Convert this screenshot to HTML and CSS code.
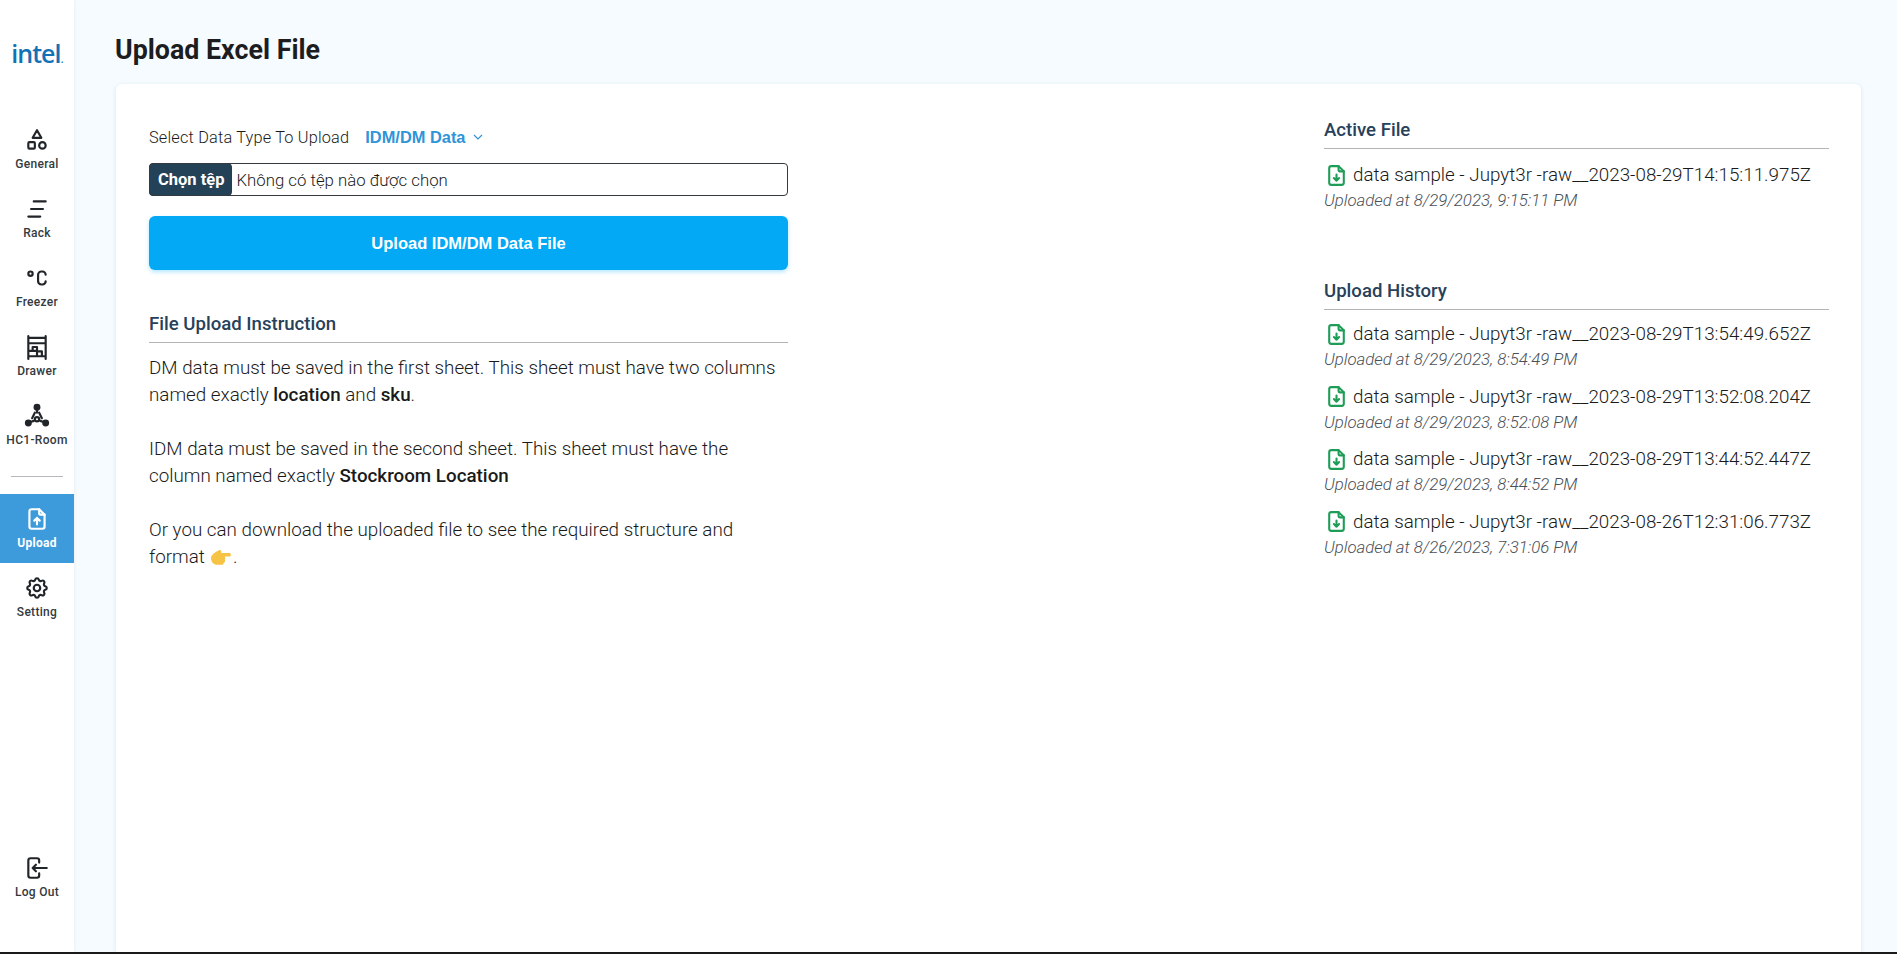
FILE: index.html
```html
<!DOCTYPE html>
<html lang="vi">
<head>
    <meta charset="UTF-8">
    <title>Upload Excel File</title>
    <link rel="stylesheet" href="styles.css">
</head>
<body>
    <div class="app">
        <!-- Sidebar -->
        <aside class="sidebar">
            <div class="logo">intel<span class="logo-dot">.</span></div>
            <nav class="nav">
                <a class="nav-item">
                    <svg class="icon" viewBox="0 0 24 24"><path d="M12 3l-4 7h8z"/><circle cx="17" cy="17" r="3"/><rect x="4" y="14" width="6" height="6" rx="1"/></svg>
                    <span>General</span>
                </a>
                <a class="nav-item">
                    <svg class="icon" viewBox="0 0 24 24"><path d="M9 5h11M6.500 12h11M4 19h11"/></svg>
                    <span>Rack</span>
                </a>
                <a class="nav-item">
                    <svg class="icon" viewBox="0 0 24 24"><circle cx="6" cy="8" r="2"/><path d="M20 9a3 3 0 0 0 -3 -3h-1a3 3 0 0 0 -3 3v6a3 3 0 0 0 3 3h1a3 3 0 0 0 3 -3"/></svg>
                    <span>Freezer</span>
                </a>
                <a class="nav-item">
                    <svg class="icon" viewBox="0 0 24 24"><path d="M4 23v-21M20 23v-21M4 3.500h16M4 8.500h16M4 20.500h16M8 12h4v3.500h-4zM4 15.500h8M12 16h4.500v4.500h-4.500z"/></svg>
                    <span>Drawer</span>
                </a>
                <a class="nav-item">
                    <svg class="icon" viewBox="0 0 24 24"><circle class="solid" cx="12" cy="4" r="2.200"/><circle class="solid" cx="4" cy="18.500" r="2.200"/><circle class="solid" cx="20" cy="18.500" r="2.200"/><circle cx="12" cy="15" r="2"/><path d="M12 6v3M6 17.500l3 -1M18 17.500l-3 -1M10 9l-2.500 5M14 9l2.500 5"/></svg>
                    <span>HC1-Room</span>
                </a>
                <div class="nav-divider"></div>
                <a class="nav-item active">
                    <svg class="icon" viewBox="0 0 24 24"><path d="M14 3v4a1 1 0 0 0 1 1h4"/><path d="M17 21h-10a2 2 0 0 1 -2 -2v-14a2 2 0 0 1 2 -2h7l5 5v11a2 2 0 0 1 -2 2z"/><path d="M12 17v-6M9.500 13.500l2.500 -2.500l2.500 2.500"/></svg>
                    <span>Upload</span>
                </a>
                <a class="nav-item">
                    <svg class="icon" viewBox="0 0 24 24"><path d="M10.325 4.317c.426 -1.756 2.924 -1.756 3.35 0a1.724 1.724 0 0 0 2.573 1.066c1.543 -.94 3.31 .826 2.37 2.37a1.724 1.724 0 0 0 1.065 2.572c1.756 .426 1.756 2.924 0 3.35a1.724 1.724 0 0 0 -1.066 2.573c.94 1.543 -.826 3.31 -2.37 2.37a1.724 1.724 0 0 0 -2.572 1.065c-.426 1.756 -2.924 1.756 -3.35 0a1.724 1.724 0 0 0 -2.573 -1.066c-1.543 .94 -3.31 -.826 -2.37 -2.370a1.724 1.724 0 0 0 -1.065 -2.572c-1.756 -.426 -1.756 -2.924 0 -3.350a1.724 1.724 0 0 0 1.066 -2.573c-.94 -1.543 .826 -3.31 2.37 -2.37c1 .608 2.296 .07 2.572 -1.065z"/><circle cx="12" cy="12" r="3"/></svg>
                    <span>Setting</span>
                </a>
            </nav>
            <a class="nav-item logout">
                <svg class="icon" viewBox="0 0 24 24"><path d="M14 7v-2a2 2 0 0 0 -2 -2h-6a2 2 0 0 0 -2 2v14a2 2 0 0 0 2 2h6a2 2 0 0 0 2 -2v-2"/><path d="M21 12h-13M11 9l-3 3l3 3"/></svg>
                <span>Log Out</span>
            </a>
        </aside>

        <!-- Main Content -->
        <main class="main">
            <h1 class="page-title">Upload Excel File</h1>
            <section class="card">
                <div class="col-left">
                    <div class="type-row">
                        <span class="type-label">Select Data Type To Upload</span>
                        <span class="type-value">IDM/DM Data
                            <svg class="chevron" viewBox="0 0 12 12"><path d="M2 4l4 4l4 -4"/></svg>
                        </span>
                    </div>
                    <div class="file-input">
                        <span class="file-btn">Chọn tệp</span>
                        <span class="file-name">Không có tệp nào được chọn</span>
                    </div>
                    <button class="upload-btn">Upload IDM/DM Data File</button>

                    <h2 class="section-title">File Upload Instruction</h2>
                    <p class="text">DM data must be saved in the first sheet. This sheet must have two columns named exactly <b>location</b> and <b>sku</b>.</p>
                    <p class="text">IDM data must be saved in the second sheet. This sheet must have the column named exactly <b>Stockroom Location</b></p>
                    <p class="text">Or you can download the uploaded file to see the required structure and format
                        <svg class="hand" viewBox="0 0 24 18"><path d="M1 9c1-3 4-6 9-8 2-1 3 1 2 3h9c2.500 0 2.500 4 0 4h-5c1 1 1 3 0 3.500 1 1 .5 3-1 3.200 0 1.300-1 2.300-2 2.300H8c-4 0-7-3-7-8z"/></svg> .</p>
                </div>

                <div class="col-right">
                    <h2 class="section-title active-title">Active File</h2>
                    <ul class="file-list">
                        <li class="file-item">
                            <div class="file-row">
                                <svg class="file-icon" viewBox="0 0 24 24"><path d="M14 3v4a1 1 0 0 0 1 1h4"/><path d="M17 21h-10a2 2 0 0 1 -2 -2v-14a2 2 0 0 1 2 -2h7l5 5v11a2 2 0 0 1 -2 2z"/><path d="M12 11v6M9.500 14.500l2.500 2.500l2.500 -2.500"/></svg>
                                data sample - Jupyt3r -raw__2023-08-29T14:15:11.975Z
                            </div>
                            <div class="file-date">Uploaded at 8/29/2023, 9:15:11 PM</div>
                        </li>
                    </ul>

                    <h2 class="section-title history-title">Upload History</h2>
                    <ul class="file-list">
                        <li class="file-item">
                            <div class="file-row">
                                <svg class="file-icon" viewBox="0 0 24 24"><path d="M14 3v4a1 1 0 0 0 1 1h4"/><path d="M17 21h-10a2 2 0 0 1 -2 -2v-14a2 2 0 0 1 2 -2h7l5 5v11a2 2 0 0 1 -2 2z"/><path d="M12 11v6M9.500 14.500l2.500 2.500l2.500 -2.500"/></svg>
                                data sample - Jupyt3r -raw__2023-08-29T13:54:49.652Z
                            </div>
                            <div class="file-date">Uploaded at 8/29/2023, 8:54:49 PM</div>
                        </li>
                        <li class="file-item">
                            <div class="file-row">
                                <svg class="file-icon" viewBox="0 0 24 24"><path d="M14 3v4a1 1 0 0 0 1 1h4"/><path d="M17 21h-10a2 2 0 0 1 -2 -2v-14a2 2 0 0 1 2 -2h7l5 5v11a2 2 0 0 1 -2 2z"/><path d="M12 11v6M9.500 14.500l2.500 2.500l2.500 -2.500"/></svg>
                                data sample - Jupyt3r -raw__2023-08-29T13:52:08.204Z
                            </div>
                            <div class="file-date">Uploaded at 8/29/2023, 8:52:08 PM</div>
                        </li>
                        <li class="file-item">
                            <div class="file-row">
                                <svg class="file-icon" viewBox="0 0 24 24"><path d="M14 3v4a1 1 0 0 0 1 1h4"/><path d="M17 21h-10a2 2 0 0 1 -2 -2v-14a2 2 0 0 1 2 -2h7l5 5v11a2 2 0 0 1 -2 2z"/><path d="M12 11v6M9.500 14.500l2.500 2.500l2.500 -2.500"/></svg>
                                data sample - Jupyt3r -raw__2023-08-29T13:44:52.447Z
                            </div>
                            <div class="file-date">Uploaded at 8/29/2023, 8:44:52 PM</div>
                        </li>
                        <li class="file-item">
                            <div class="file-row">
                                <svg class="file-icon" viewBox="0 0 24 24"><path d="M14 3v4a1 1 0 0 0 1 1h4"/><path d="M17 21h-10a2 2 0 0 1 -2 -2v-14a2 2 0 0 1 2 -2h7l5 5v11a2 2 0 0 1 -2 2z"/><path d="M12 11v6M9.500 14.500l2.500 2.500l2.500 -2.500"/></svg>
                                data sample - Jupyt3r -raw__2023-08-26T12:31:06.773Z
                            </div>
                            <div class="file-date">Uploaded at 8/26/2023, 7:31:06 PM</div>
                        </li>
                    </ul>
                </div>
            </section>
        </main>
    </div>
    <div class="screen-edge"></div>
</body>
</html>
```

FILE: styles.css
```css
* {
    margin: 0;
    padding: 0;
    box-sizing: border-box;
}

html,
body {
    height: 100%;
    overflow: hidden;
}

body {
    display: flex;
    flex-direction: column;
    font-family: Roboto, sans-serif;
    color: #1a1a1a;
    background: #f5fbff;
}

.app {
    flex: 1;
    min-height: 0;
    display: flex;
}

.screen-edge {
    height: 2px;
    background: #1a1a1a;
}

/* Sidebar */
.sidebar {
    width: 74px;
    flex-shrink: 0;
    display: flex;
    flex-direction: column;
    background: #fff;
    box-shadow: 1px 0 3px rgba(30, 70, 110, 0.05);
}

.logo {
    margin-top: 36px;
    height: 34px;
    text-align: center;
    font-family: "Open Sans", sans-serif;
    font-size: 25px;
    font-weight: 600;
    line-height: 34px;
    letter-spacing: -1px;
    color: #1272b5;
}

.logo-dot {
    font-size: 12px;
    font-weight: 400;
}

.nav {
    margin-top: 53px;
    display: flex;
    flex-direction: column;
}

.nav-item {
    height: 69px;
    display: flex;
    flex-direction: column;
    align-items: center;
    padding-top: 4px;
    font-size: 12px;
    font-weight: 500;
    line-height: 13px;
    letter-spacing: 0.3px;
    color: #343a40;
}

.icon {
    width: 26px;
    height: 26px;
    margin-bottom: 5px;
    fill: none;
    stroke: #212529;
    stroke-width: 2;
    stroke-linecap: round;
    stroke-linejoin: round;
}

.icon .solid {
    fill: #212529;
}

.nav-divider {
    width: 52px;
    height: 1px;
    margin: 8px auto 17px;
    background: #b5b9bd;
}

.nav-item.active {
    margin-bottom: 8px;
    padding-top: 12px;
    background: #3d9bdc;
    color: #fff;
    font-weight: 700;
}

.nav-item.active .icon {
    stroke: #fff;
}

.logout {
    margin-top: auto;
    margin-bottom: 32px;
}

/* Main Content */
.main {
    flex: 1;
    min-width: 0;
    display: flex;
    flex-direction: column;
    padding: 0 36px 0 42px;
}

.page-title {
    height: 84px;
    margin-left: -1px;
    padding-top: 33px;
    font-size: 26.8px;
    line-height: 34px;
    font-weight: 700;
    color: #1d1d1f;
}

.card {
    flex: 1;
    display: flex;
    justify-content: space-between;
    padding: 0 32px 0 33px;
    background: #fff;
    border-radius: 6px 6px 0 0;
    box-shadow: 0 1px 4px rgba(30, 70, 110, 0.12);
}

.col-left {
    width: 639px;
    padding-top: 38px;
}

.col-right {
    width: 505px;
    padding-top: 32px;
}

.type-row {
    height: 30px;
    display: flex;
    align-items: center;
}

.type-label {
    font-size: 16.3px;
    font-weight: 300;
    letter-spacing: 0.2px;
}

.type-value {
    margin-left: 16px;
    display: flex;
    align-items: center;
    gap: 7px;
    font-family: "Liberation Sans", sans-serif;
    font-size: 16.4px;
    font-weight: 700;
    color: #2f94d8;
}

.chevron {
    width: 12px;
    height: 12px;
    fill: none;
    stroke: #2f94d8;
    stroke-width: 1.2;
}

.file-input {
    height: 33px;
    margin-top: 11px;
    display: flex;
    align-items: center;
    border: 1px solid #343a40;
    border-radius: 4px;
}

.file-btn {
    height: 33px;
    margin-left: -1px;
    padding: 0 7px 0 8px;
    display: flex;
    align-items: center;
    background: #234258;
    border: 1px solid #343a40;
    border-radius: 4px;
    font-size: 16.5px;
    font-weight: 700;
    color: #fff;
}

.file-name {
    margin-left: 4px;
    font-size: 16.8px;
    font-weight: 300;
}

.upload-btn {
    width: 100%;
    height: 54px;
    margin-top: 20px;
    border: none;
    border-radius: 6px;
    background: #03a9f4;
    box-shadow: 0 2px 4px rgba(3, 169, 244, 0.3);
    font-family: "Liberation Sans", sans-serif;
    font-size: 16.5px;
    font-weight: 700;
    color: #fff;
}

.section-title {
    height: 33px;
    margin-top: 40px;
    margin-bottom: 12px;
    border-bottom: 1px solid #b4b4b4;
    font-size: 18.6px;
    line-height: 29px;
    font-weight: 500;
    color: #28415a;
}

.active-title {
    margin-top: 0;
    margin-bottom: 13px;
}

.history-title {
    margin-top: 65px;
    margin-bottom: 11px;
}

.text {
    margin-bottom: 27px;
    font-size: 18.8px;
    line-height: 27px;
    font-weight: 300;
}

.text b {
    font-weight: 500;
}

.hand {
    width: 22px;
    height: 17px;
    margin: 0 -4px 0 1px;
    vertical-align: -3px;
    fill: #f6c344;
}

.file-list {
    list-style: none;
}

.file-item {
    margin-bottom: 12.5px;
}

.file-row {
    height: 26px;
    display: flex;
    align-items: center;
    gap: 4px;
    font-size: 18.8px;
    font-weight: 300;
}

.file-icon {
    width: 25px;
    height: 25px;
    flex-shrink: 0;
    fill: none;
    stroke: #1f9d57;
    stroke-width: 2;
    stroke-linecap: round;
    stroke-linejoin: round;
}

.file-date {
    height: 24px;
    font-size: 16.8px;
    line-height: 24px;
    font-weight: 300;
    font-style: italic;
    color: #495057;
}
```
